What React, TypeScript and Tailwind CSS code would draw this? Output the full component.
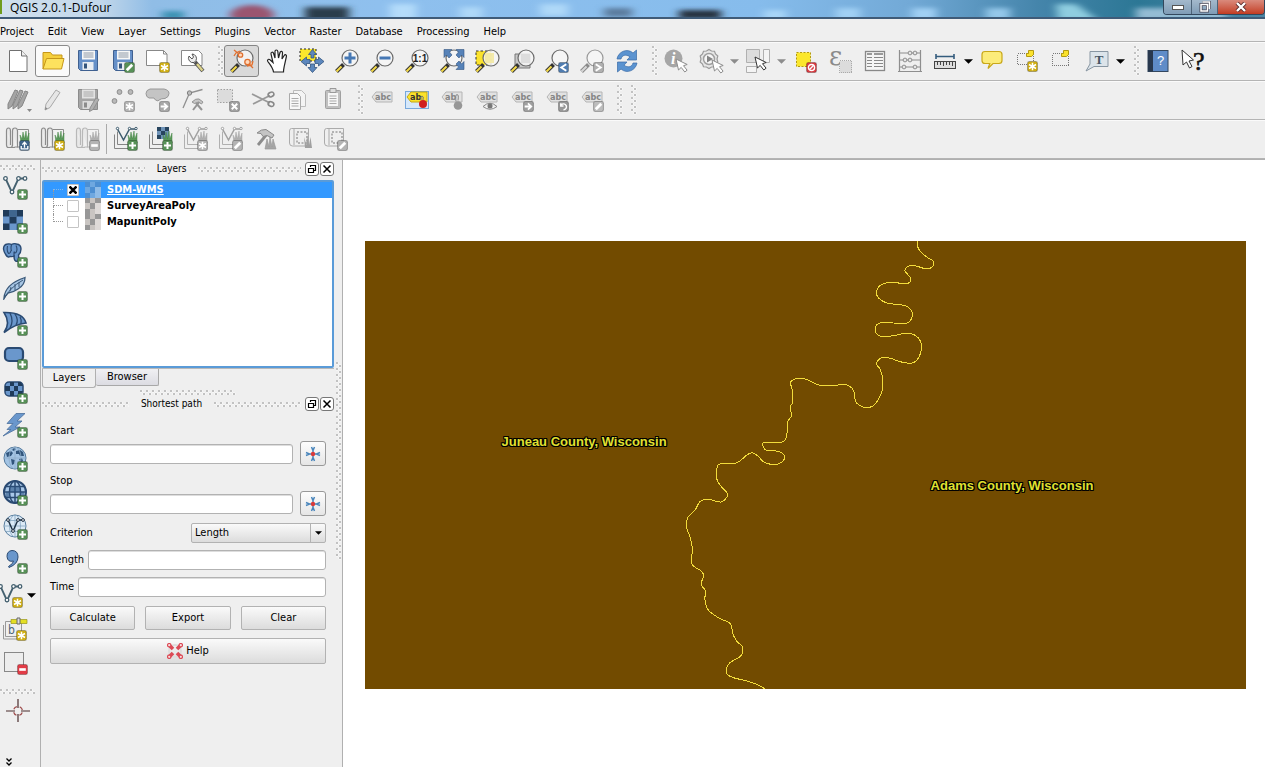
import type { ReactNode } from "react";

type IconProps = { children: ReactNode; className?: string };

function Svg({ children, className = "h-6 w-6" }: IconProps) {
  return (
    <svg viewBox="0 0 24 24" className={`${className} shrink-0 overflow-visible`} fill="none" aria-hidden="true">
      {children}
    </svg>
  );
}

/* ---------- badges and shared shapes ---------- */

type BadgeKind = "plus" | "star" | "pen" | "minus" | "x" | "arrow" | "up" | "left" | "right" | "rotate" | "no";

function Badge({ kind, fill, x = 13, y = 13 }: { kind: BadgeKind; fill: string; x?: number; y?: number }) {
  return (
    <g transform={`translate(${x} ${y}) scale(1.1)`}>
      <rect x="0.5" y="0.5" width="9" height="9" rx="1.5" fill={fill} stroke="#000" strokeOpacity="0.25" />
      <g stroke="#fff" strokeWidth="1.8">
        {kind === "plus" && <path d="M5 1.8v6.4M1.8 5h6.4" />}
        {kind === "minus" && <path d="M2 5h6" strokeWidth="2.4" />}
        {kind === "star" && <path d="M5 1.5v7M1.8 3.2l6.4 3.6M8.2 3.2L1.8 6.8" strokeWidth="1.4" />}
        {kind === "pen" && <path d="M2.5 7.5l5-5" strokeWidth="2.6" />}
        {kind === "x" && <path d="M2.5 2.5l5 5M7.5 2.5l-5 5" />}
        {kind === "arrow" && <path d="M1.5 5h5M4.5 2.2L7.5 5l-3 2.8" strokeWidth="1.6" />}
        {kind === "up" && <path d="M5 7V2.5M3 4.2L5 2l2 2.2M2 5.5V8h6V5.5" strokeWidth="1.2" />}
        {kind === "left" && <path d="M7.5 2L3 5l4.5 3" />}
        {kind === "right" && <path d="M2.5 2L7 5 2.5 8" />}
        {kind === "rotate" && <path d="M3 3.5A2.7 2.7 0 1 1 5 8M2.5 2v2.5H5" strokeWidth="1.3" />}
        {kind === "no" && (
          <>
            <circle cx="5" cy="5" r="2.8" strokeWidth="1.3" />
            <path d="M3 7l4-4" strokeWidth="1.3" />
          </>
        )}
      </g>
    </g>
  );
}

const GREEN = "#579157";
const GOLD = "#cfae12";
const GRAY = "#b4b4b4";

function Lens({ gray = false, children, cx = 15 }: { gray?: boolean; children?: ReactNode; cx?: number }) {
  return (
    <>
      <path d="M1.5 22.5l7-7" stroke={gray ? "#8a8a8a" : "#333"} strokeWidth="4" />
      <path d="M1.5 22.5l5-5" stroke={gray ? "#d6d6d6" : "#f3d94a"} strokeWidth="2.2" />
      <circle cx={cx} cy="9" r="8" fill="#f6f6f6" fillOpacity="0.85" stroke={gray ? "#999" : "#6b6b6b"} strokeWidth="1.2" />
      {children}
    </>
  );
}

function VectorV({ c = "#44606f", fill = "#fff" }: { c?: string; fill?: string }) {
  return (
    <g stroke={c} strokeWidth="1.3" fill={fill}>
      <path d="M2.5 3.5L9 17.5 15.5 3.5H22" fill="none" strokeWidth="1.8" />
      <circle cx="2.5" cy="3.5" r="1.8" />
      <circle cx="9" cy="17" r="1.8" />
      <circle cx="15.5" cy="3.5" r="1.8" />
      <circle cx="22" cy="3.5" r="1.8" />
    </g>
  );
}

function Floppy({ gray = false }: { gray?: boolean }) {
  return (
    <>
      <path d="M2.5 1.5h19v20H4.5l-2-2z" fill={gray ? "#a5a5a5" : "#6690c8"} stroke={gray ? "#8c8c8c" : "#3f6090"} />
      <rect x="6" y="1.5" width="13" height="9" fill={gray ? "#e2e2e2" : "#f7f7f7"} />
      <path d="M7.5 4h10M7.5 6h10M7.5 8h10" stroke={gray ? "#aaa" : "#8f9aa8"} />
      <rect x="6.5" y="13" width="11" height="8" fill={gray ? "#dcdcdc" : "#e9edf2"} />
      <rect x="8" y="14.5" width="3" height="5" fill={gray ? "#8c8c8c" : "#34557c"} />
    </>
  );
}

function Cursor({ x = 12, y = 10, gray = true }: { x?: number; y?: number; gray?: boolean }) {
  return (
    <path
      transform={`translate(${x} ${y})`}
      d="M0 0l2.5 11 2.7-2.6 3.6 4.6 2.3-1.8-3.6-4.5 3.7-1.2z"
      fill="#fff"
      stroke={gray ? "#8c8c8c" : "#333"}
    />
  );
}

function Grass({ gray = false }: { gray?: boolean }) {
  return (
    <path
      d="M14 16l-1-8 2 4 1-7 1.5 7 1.500-8 .8 8 2.200-6v10z"
      transform="translate(1 0)"
      fill={gray ? "#b0b0b0" : "#5a9a5a"}
      stroke={gray ? "#a5a5a5" : "#468446"}
      strokeWidth="0.5"
    />
  );
}

function GrassRolls({ gray = false, badge }: { gray?: boolean; badge: ReactNode }) {
  const s = gray ? "#b8b8b8" : "#8c8c8c";
  return (
    <Svg>
      <path d="M12 2.500h10.500V20H8" stroke={s} fill="#f2f2f2" />
      <path d="M0.500 4q0-3 2-3t2 3v14M0.500 4v14q0 2.500 2 2.500H9M6.500 4q0-3 2.500-3t2.500 3v16.500M6.500 4v13.500q0 3-2 3" stroke={s} fill="#e8e8e8" strokeWidth="1.200" />
      <Grass gray={gray} />
      {badge}
    </Svg>
  );
}

function GrassLayer({ gray = false, raster = false, badge }: { gray?: boolean; raster?: boolean; badge: ReactNode }) {
  const s = gray ? "#b0b0b0" : "#858585";
  return (
    <Svg>
      <path d="M3.500 4.500v13H21M0.500 7.500v14H15" stroke={s} />
      {raster ? (
        <>
          <rect x="8" y="0" width="12" height="12" fill="#6f93b8" />
          <path d="M8 0h4v4H8zM16 0h4v4h-4zM12 4h4v4h-4zM8 8h4v4H8z" fill="#28455f" />
        </>
      ) : (
        <g stroke={gray ? "#a0a0a0" : "#3c5a6c"}>
          <path d="M3.500 2L9.500 13 15.500 2H22" strokeWidth="1.500" />
          <circle cx="3.500" cy="1.500" r="1.200" fill="#fff" />
          <circle cx="15.500" cy="1.500" r="1.200" fill="#fff" />
          <circle cx="22" cy="1.500" r="1.200" fill="#fff" />
        </g>
      )}
      <Grass gray={gray} />
      {badge}
    </Svg>
  );
}

function Label({ children, yellow = false, short = false }: { children?: ReactNode; yellow?: boolean; short?: boolean }) {
  return (
    <Svg>
      {yellow && <rect x="0.5" y="3.500" width="23" height="17" fill="#d6e8fa" stroke="#78a8dc" />}
      <path d="M2 9l4-5h16v10H6z" fill={yellow ? "#fbe32a" : "#e2e2e2"} stroke={yellow ? "#c2a614" : "#b4b4b4"} />
      <text
        x="5"
        y="12"
        fontSize="9"
        fontWeight="700"
        fontFamily="DejaVu Sans Condensed, sans-serif"
        fill={yellow ? "#333" : "#858585"}
      >
        {yellow || short ? "ab" : "abc"}
      </text>
      {children}
    </Svg>
  );
}

function Hammer() {
  return (
    <g stroke="#949494" fill="#c6c6c6">
      <path d="M12 22L19 13M21 22l-6-7" strokeWidth="2" />
      <path d="M11 14q4-4 7-3l4 3-1.500 2-3-2-4 1.500z" />
    </g>
  );
}

/* ---------- main toolbar icons ---------- */

const NewIcon = () => (
  <Svg>
    <path d="M3.500 1.500h12l5.500 5.500v15.500H3.500z" fill="#fff" stroke="#707070" />
    <path d="M15.500 1.500V7H21" fill="#eee" stroke="#707070" />
  </Svg>
);
const OpenIcon = () => (
  <Svg>
    <path d="M2 20V3.500h7.500l2 2.500H21v4" fill="#f5cf3c" stroke="#c5961a" />
    <path d="M2 20L5.500 9.500H23L20.500 20z" fill="#fde25e" stroke="#c5961a" />
  </Svg>
);
const SaveIcon = () => <Svg><Floppy /></Svg>;
const SaveAsIcon = () => <Svg><Floppy /><Badge kind="pen" fill={GREEN} /></Svg>;
const ComposerIcon = () => (
  <Svg>
    <path d="M0.500 1.500h17l3.500 3.500v11.500H0.500z" fill="#fff" stroke="#888" />
    <path d="M17.500 1.500V5H21" stroke="#888" />
    <Badge kind="star" fill={GOLD} />
  </Svg>
);
const ManagerIcon = () => (
  <Svg>
    <path d="M0.500 1.500h17l3.500 3.500v11.500H0.500z" fill="#fff" stroke="#888" />
    <path d="M14 13l8 9" stroke="#555" strokeWidth="4" />
    <path d="M16 15l5.500 6.500" stroke="#ded48a" strokeWidth="2.400" />
    <path d="M8 7a4.500 4.500 0 0 0 5 6.500l2-2a4.500 4.500 0 0 0-4-6.500l1.500 3-1.500 2z" fill="#eee" stroke="#555" />
  </Svg>
);
const TouchIcon = () => (
  <Svg>
    <Lens />
    <g stroke="#e07030" fill="#ffd9bd" strokeWidth="1.300">
      <path d="M4 1l5 4M4 7l2-3 4-2M23 19l-4-4M23 12l-1 4-5 1" />
      <circle cx="10.500" cy="6" r="2.200" />
      <circle cx="17.500" cy="13" r="2.700" />
    </g>
  </Svg>
);
const PanIcon = () => (
  <Svg>
    <path
      d="M8.500 23C8 19 5.500 16 2.800 12.500c-1-2 1-3 2.500-1.500L8 13.500 6 5c-.3-2 2-2.500 2.600-.500L10 9V2.500c0-2 2.600-2 2.800 0L13.500 9 15 3.500c.5-1.800 2.700-1.300 2.500.500L17 10l2.200-3.500c1-1.500 2.600-.500 2.200 1L19.500 16c-.5 3-1 4-1 7z"
      fill="#fff"
      stroke="#222"
      strokeWidth="1.200"
    />
  </Svg>
);
const PanSelectionIcon = () => (
  <Svg>
    <rect x="0" y="0" width="16" height="12" fill="#fbe72c" stroke="#222" strokeDasharray="2 2" />
    <path
      d="M12.500 0.500l4 5H14v3.500h-3V5.500H8.500zM12.500 23.500l4.500-5h-2.500V15h-4v3.500H8zM1 12.500l5.500-4.500v2.500H10v4H6.500V17zM24 12.500L18.500 8v2.500H15v4h3.500V17z"
      fill="#5c87bd"
      stroke="#34567f"
      strokeWidth="0.800"
    />
  </Svg>
);
const ZoomInIcon = () => <Svg><Lens><path d="M15 3.500v11M9.500 9h11" stroke="#4678b4" strokeWidth="3" /></Lens></Svg>;
const ZoomOutIcon = () => <Svg><Lens><path d="M9.500 9h11" stroke="#4678b4" strokeWidth="3" /></Lens></Svg>;
const ZoomNativeIcon = () => (
  <Svg>
    <Lens>
      <text x="15" y="13" textAnchor="middle" fontSize="10" fontWeight="700" fontFamily="Liberation Sans, sans-serif" fill="#222">1:1</text>
    </Lens>
  </Svg>
);
const ZoomFullIcon = () => (
  <Svg>
    <Lens cx={14} />
    <path
      d="M4 0.500h8L9.500 3l2.500 3L9 9 6.500 6 4 8.500zM24 0.500h-8L18.500 3 16 6l3 3 2.500-3L24 8.500zM24 20.500h-8l2.500-2.500-2.500-3 3-3 2.500 3 2.500-2.500z"
      fill="#5682b8"
      stroke="#34567f"
      strokeWidth="0.600"
    />
  </Svg>
);
const ZoomSelectionIcon = () => (
  <Svg>
    <rect x="1" y="2" width="15" height="14" fill="#fbe22c" stroke="#333" strokeDasharray="2.500 2" />
    <Lens cx={16} />
    <path d="M10 4h9v10h-9z" fill="#f3e79a" fillOpacity="0.800" />
  </Svg>
);
const ZoomLayerIcon = () => (
  <Svg>
    <path d="M5 5h15v14H5z" fill="#c9c9c9" stroke="#777" />
    <Lens cx={16} />
    <path d="M11 5h9v9h-9z" fill="#ddd" />
  </Svg>
);
const ZoomLastIcon = () => <Svg><Lens /><Badge kind="left" fill="#4f7cb0" /></Svg>;
const ZoomNextIcon = () => <Svg><Lens gray /><Badge kind="right" fill="#b0b0b0" /></Svg>;
const RefreshIcon = () => (
  <Svg>
    <path d="M2 10C3 3 12-1.500 18 4l3.500-3v10H12l3-3.200C11 5 7 6 6 10z" fill="#5b93d0" stroke="#3a6ca8" strokeWidth="0.700" />
    <path d="M22 14c-1 7-10 11.500-16 6l-3.500 3V13H12l-3 3.200c4 2.800 8 1.800 9-2.200z" fill="#5b93d0" stroke="#3a6ca8" strokeWidth="0.700" />
  </Svg>
);
const IdentifyIcon = () => (
  <Svg>
    <circle cx="9.500" cy="9.500" r="9" fill="#a6a6a6" />
    <text x="7" y="15" fontSize="16" fontWeight="700" fontStyle="italic" fontFamily="Liberation Serif, serif" fill="#fff">i</text>
    <Cursor x={12} y={10} />
  </Svg>
);
const ActionIcon = () => (
  <Svg>
    <path
      d="M10 0.500l2.500 1.500 3 .2 1 2.800 2.300 2-.8 3 .8 3-2.300 2-1 2.800-3 .2-2.500 1.500-2.500-1.500-3-.2-1-2.800-2.300-2 .8-3-.8-3 2.300-2 1-2.800 3-.2z"
      fill="#e6e6e6"
      stroke="#9a9a9a"
      strokeWidth="1.200"
    />
    <circle cx="10" cy="10" r="5.500" fill="#f6f6f6" stroke="#a0a0a0" strokeWidth="1.500" />
    <path d="M8 6.500l6 3.500-6 3.500z" fill="#858585" />
    <Cursor x={13} y={11} />
  </Svg>
);
const SelectIcon = () => (
  <Svg>
    <path d="M0.500 0.500h13v13h-13z" fill="#ddd" stroke="#b0b0b0" />
    <path d="M17.500 0.500h6v13h-6zM0.500 17.500h10v6h-10z" fill="#f4f4f4" stroke="#b0b0b0" />
    <Cursor x={9} y={8} gray={false} />
  </Svg>
);
const DeselectIcon = () => (
  <Svg>
    <rect x="3.500" y="3.500" width="14" height="14" fill="#fbe72c" stroke="#b39a12" strokeDasharray="2 1.500" />
    <Badge kind="no" fill="#d93a40" />
  </Svg>
);
const ExpressionIcon = () => (
  <Svg>
    <text x="1" y="16" fontSize="26" fontFamily="DejaVu Serif, serif" fill="#8a8a8a">ε</text>
    <rect x="11.500" y="11.500" width="12" height="12" fill="#dcdcdc" stroke="#aaa" strokeDasharray="1 1" shapeRendering="crispEdges" />
  </Svg>
);
const TableIcon = () => (
  <Svg>
    <rect x="2.500" y="2.500" width="19" height="19" fill="#f5f5f5" stroke="#888" strokeWidth="1.300" />
    <path d="M4 5h5M11 5h9" stroke="#999" strokeWidth="2" />
    <path d="M4 8.500h5M11 8.500h9M4 11.500h5M11 11.500h9M4 14.500h5M11 14.500h9M4 17.500h5M11 17.500h9" stroke="#888" />
  </Svg>
);
const AbacusIcon = () => (
  <Svg>
    <path d="M1.500 1v22M22.500 1v22M0 22.500h24M2 4h20M2 11h20M2 18h20" stroke="#8e8e8e" strokeWidth="1.200" />
    <g fill="#e6e6e6" stroke="#8e8e8e">
      <circle cx="12" cy="4" r="1.900" /><circle cx="17" cy="4" r="1.900" />
      <circle cx="7" cy="11" r="1.900" /><circle cx="12" cy="11" r="1.900" />
      <circle cx="6" cy="18" r="1.900" /><circle cx="17" cy="18" r="1.900" />
    </g>
  </Svg>
);
const MeasureIcon = () => (
  <Svg>
    <path d="M3 7.500h18M3 5v5M21 5v5" stroke="#345c7d" strokeWidth="1.600" />
    <rect x="1.500" y="12.500" width="21" height="7" fill="#ddd" stroke="#444" />
    <path d="M4.500 13v3M7.500 13v3M10.500 13v4M13.500 13v3M16.500 13v3M19.500 13v4" stroke="#444" />
  </Svg>
);
const TipsIcon = () => (
  <Svg>
    <path d="M5 2.500h14q3 0 3 3v6q0 3-3 3h-6l-5 5 1.800-5H5q-3 0-3-3v-6q0-3 3-3z" fill="#fcec7a" stroke="#c9a81a" strokeWidth="1.200" />
  </Svg>
);
const Ribbon = () => <path d="M11.500 4.500h2v-3h5v4l-2 2h-5z" fill="#fbe22c" stroke="#b39a12" />;
const NewBookmarkIcon = () => (
  <Svg>
    <rect x="2.500" y="4.500" width="16" height="11" stroke="#777" strokeDasharray="1 1" shapeRendering="crispEdges" />
    <Ribbon />
    <Badge kind="star" fill={GOLD} x={12} y={12} />
  </Svg>
);
const BookmarksIcon = () => (
  <Svg>
    <rect x="2.500" y="4.500" width="16" height="12" stroke="#777" strokeDasharray="1 1" shapeRendering="crispEdges" />
    <Ribbon />
  </Svg>
);
const AnnotationIcon = () => (
  <Svg>
    <path d="M5 2.500h18v15H9l-8 4.500 4-7z" fill="#dce4ea" stroke="#8896a2" />
    <text x="14" y="14.500" textAnchor="middle" fontSize="13" fontWeight="700" fontFamily="Liberation Serif, serif" fill="#465563">T</text>
  </Svg>
);
const HelpBookIcon = () => (
  <Svg>
    <rect x="2" y="1.500" width="20" height="21" fill="#5f8cc8" stroke="#33475f" />
    <rect x="2" y="1.500" width="5" height="21" fill="#28384e" />
    <text x="14.500" y="16" textAnchor="middle" fontSize="13" fontFamily="Liberation Sans, sans-serif" fill="#fff">?</text>
  </Svg>
);
const WhatsThisIcon = () => (
  <Svg>
    <path d="M1 1l1 15 3.500-3 3 6 2.500-1.500-3-5.500 4.500-1z" fill="#fff" stroke="#333" />
    <text x="12" y="21" fontSize="26" fontFamily="Liberation Serif, serif" fill="#111" stroke="#111" strokeWidth="0.600">?</text>
  </Svg>
);

/* ---------- editing toolbar icons ---------- */

const PencilsIcon = () => (
  <Svg>
    <path d="M2 16L9 2l3 1L6 18l-4 3zM7 17l7-15 3 1-6 15-4 3zM12 17l7-14 3 1-6 14-4 3z" fill="#a5a5a5" stroke="#868686" />
    <path d="M21 21h5l-2.500 3z" fill="#888" />
  </Svg>
);
const PencilIcon = () => (
  <Svg>
    <path d="M5 16L15 2l4 2.500-10 15L4 22z" fill="#e6e6e6" stroke="#a8a8a8" />
    <path d="M4 22l.5-3 2 1.500z" fill="#888" />
  </Svg>
);
const SaveEditsIcon = () => (
  <Svg>
    <Floppy gray />
    <path d="M14 20l6-10 3 1.500-6 10-3.500 2z" fill="#b0b0b0" stroke="#909090" />
  </Svg>
);
const AddFeatureIcon = () => (
  <Svg>
    <g fill="#b9b9b9" stroke="#8d8d8d">
      <circle cx="8.500" cy="4" r="2.400" /><circle cx="19.500" cy="4" r="2.400" /><circle cx="3.500" cy="13" r="2.400" />
    </g>
    <Badge kind="star" fill={GRAY} />
  </Svg>
);
const MoveFeatureIcon = () => (
  <Svg>
    <path d="M4 1h14q5 1 5 4.500t-4 5q-4 0-5 1-2 2.500-4.500.5L8 10H3Q0 9 0 5.500T4 1z" fill="#c4c4c4" stroke="#989898" />
    <Badge kind="arrow" fill="#a8a8a8" />
  </Svg>
);
const NodeIcon = () => (
  <Svg>
    <path d="M2 20L8.500 5l13-3.500" stroke="#909090" strokeWidth="1.300" />
    <circle cx="8.500" cy="5" r="2.200" fill="#bbb" stroke="#808080" />
    <Hammer />
  </Svg>
);
const DeleteIcon = () => (
  <Svg>
    <rect x="1.500" y="1.500" width="15" height="13" fill="#dcdcdc" stroke="#a0a0a0" strokeDasharray="1.500 1.500" />
    <Badge kind="x" fill="#a2a2a2" />
  </Svg>
);
const CutIcon = () => (
  <Svg>
    <path d="M1 6l18 9M2 16L19 7.500" stroke="#999" strokeWidth="1.800" />
    <ellipse cx="20" cy="6.500" rx="3" ry="2.200" stroke="#888" strokeWidth="1.500" transform="rotate(-25 20 6.500)" />
    <ellipse cx="20" cy="16" rx="3" ry="2.200" stroke="#888" strokeWidth="1.500" transform="rotate(25 20 16)" />
  </Svg>
);
const CopyIcon = () => (
  <Svg>
    <path d="M7.500 2.500h8l4 4v12h-12z" fill="#f4f4f4" stroke="#bcbcbc" />
    <path d="M3.500 5.500h8l3 3v13h-11z" fill="#f8f8f8" stroke="#aaa" />
    <path d="M5.500 10.500h7M5.500 13h7M5.500 15.500h7M5.500 18h7" stroke="#aaa" />
  </Svg>
);
const PasteIcon = () => (
  <Svg>
    <rect x="4.500" y="2.500" width="15" height="18" rx="1" fill="#c0c0c0" stroke="#a0a0a0" />
    <path d="M7 5h10v13H7z" fill="#f6f6f6" />
    <path d="M9 0.500h6v4H9z" fill="#ddd" stroke="#999" />
    <path d="M8.500 8h7M8.500 10.500h7M8.500 13h7M8.500 15.500h7" stroke="#aaa" />
  </Svg>
);
const PinOn = () => <Label yellow><circle cx="18" cy="16" r="4" fill="#d02020" /><path d="M16 12q-1-4 1-4t1 4" stroke="#777" /></Label>;
const PinOff = () => <Label short><circle cx="18" cy="17.500" r="4.300" fill="#979797" /><path d="M16 13.500q-1-7 1-7t1 6" stroke="#888" /></Label>;
const EyeLabel = () => (
  <Label>
    <path d="M8 18.500q7-6.500 14 0-7 5.500-14 0z" fill="#eee" stroke="#888" />
    <circle cx="15" cy="18" r="2.500" fill="#777" />
  </Label>
);

/* ---------- layer (side) toolbar icons ---------- */

const Plus = () => <Badge kind="plus" fill={GREEN} x={14} y={14} />;
const DARK = "#2a4a72";
const MID = "#6a97cc";

function Elephant() {
  return (
    <>
      <path
        d="M0.500 6Q0.500 1.500 4.500 1q2.500-.500 4 .5 2.500-1.500 5-.5 4.500.500 4.500 5 0 3.500-2.500 6l.5 5q-1 2-3.500 1-1.500-1-1.500-5-1.500 1-4 .5Q5 15 3 12 .8 9 .5 6z"
        fill={MID}
        stroke={DARK}
        strokeWidth="1.400"
      />
      <path d="M4.500 3q-1 5 1 7.500 2 0 2.500-3M8.500 2q-1 3 0 6M13 2.500q2 4 0 7-1.500 1-2-1M11 9v5" stroke={DARK} strokeWidth="1.100" />
    </>
  );
}

function GlobeLines({ thick = false }: { thick?: boolean }) {
  return (
    <>
      <circle cx="12" cy="11" r="11" fill={thick ? "#a9c8e8" : "#dceaf6"} stroke={thick ? DARK : "#5b7f9f"} strokeWidth={thick ? 2 : 1} />
      <path d="M1 11h22M3 5.500h18M3 16.500h18M12 0v22" stroke={thick ? DARK : "#87a7c2"} strokeWidth={thick ? 1.500 : 0.800} />
      <ellipse cx="12" cy="11" rx="5.500" ry="11" stroke={thick ? DARK : "#87a7c2"} strokeWidth={thick ? 1.500 : 0.800} />
    </>
  );
}

const sideIcons: { name: string; art: ReactNode }[] = [
  { name: "Add vector layer", art: <><VectorV /><Plus /></> },
  {
    name: "Add raster layer",
    art: (
      <>
        <rect x="0" y="1" width="20" height="20" fill={MID} />
        <path d="M0 1h6.500v6.500H0zM13.500 1H20v6.500h-6.500zM6.500 7.500h7v7h-7zM0 14.500h6.500V21H0z" fill="#1f3b5a" />
        <path d="M6.500 1h7v6.500h-7zM13.500 14.500H20V21h-6.500z" fill="#3f668f" />
        <Plus />
      </>
    ),
  },
  { name: "Add PostGIS layer", art: <><Elephant /><Plus /></> },
  {
    name: "Add SpatiaLite layer",
    art: (
      <>
        <path d="M1 21Q2 7 22 0.500 22 8 15 12q-4 3-10 4z" fill="#a8c6e4" stroke="#3a5878" strokeWidth="1.300" />
        <path d="M0.500 23Q6 11 20 3M8 10l-1 4M12 7l0 6M16 5v5" stroke="#3a5878" />
        <Plus />
      </>
    ),
  },
  {
    name: "Add MSSQL layer",
    art: (
      <>
        <path d="M1 1.500Q20 1 23 12 12 13 1 21.500 8 12 1 1.500z" fill={MID} stroke={DARK} strokeWidth="1.600" />
        <path d="M7 2q4 8 0 15M12 3q4 6 1 11M17 6q2 3 1 7" stroke={DARK} strokeWidth="1.300" />
        <Plus />
      </>
    ),
  },
  { name: "Add Oracle layer", art: <><rect x="2" y="3" width="18" height="13" rx="4" fill={MID} stroke={DARK} strokeWidth="2.200" /><Plus /></> },
  {
    name: "Add Oracle raster",
    art: (
      <>
        <rect x="2" y="3" width="18" height="14" rx="4" fill={MID} stroke={DARK} strokeWidth="1.500" />
        <path d="M7 3h4v4H7zM15 3h3l2 4h-5zM2 7h5v5H2zM11 7h4v5h-4zM7 12h4v5H7zM15 12h5l-2 5h-3z" fill="#1f3b5a" />
        <Plus />
      </>
    ),
  },
  {
    name: "Add SQL Anywhere layer",
    art: <><path d="M22 0.500H13L4 10.500h6l-6 6h4L0 23 17 14h-5l7-6h-5z" fill={MID} stroke="#4a6f9c" strokeWidth="0.800" /><Plus /></>,
  },
  {
    name: "Add WMS layer",
    art: (
      <>
        <circle cx="12" cy="11" r="11" fill="#a3c4e4" stroke="#557a9c" />
        <path d="M3 6l5-2 2 2-2 3-4 1zM13 4l4-1 3 2 1 4-4 0-1-2-3 0zM8 12l4 1-1 4-2 1zM16 12l3-1 1 3-2 2zM9 3l2-2 2 1-2 2z" fill="#31557c" />
        <path d="M1 11h22M12 0v22" stroke="#8fadc9" strokeWidth="0.800" />
        <ellipse cx="12" cy="11" rx="6" ry="11" stroke="#8fadc9" strokeWidth="0.800" />
        <Plus />
      </>
    ),
  },
  {
    name: "Add WCS layer",
    art: <><GlobeLines thick /><path d="M7 5.500h10v5.500H7zM3 11h4v5.500H3zM17 11h4v5.500h-4z" fill="#2d5584" fillOpacity="0.600" /><Plus /></>,
  },
  {
    name: "Add WFS layer",
    art: (
      <>
        <GlobeLines />
        <path d="M5 5l5 11 5-11h5" stroke="#1d2f42" strokeWidth="1.400" />
        <g fill="#fff" stroke="#1d2f42">
          <circle cx="5" cy="5" r="1.400" /><circle cx="10" cy="16" r="1.400" /><circle cx="15" cy="5" r="1.400" /><circle cx="20" cy="5" r="1.400" />
        </g>
        <Plus />
      </>
    ),
  },
  {
    name: "Add delimited text layer",
    art: <><path d="M9 1.500q6 0 6 6.500 0 7-9 10.500l-.5-1q5-3 5-5.500-6 1.500-6.500-4.500Q4 2 9 1.500z" fill={MID} stroke={DARK} /><Plus /></>,
  },
  { name: "New shapefile layer", art: <g transform="translate(-5 0)"><VectorV /><Badge kind="star" fill={GOLD} x={14} y={14} /></g> },
  {
    name: "New GPX layer",
    art: (
      <>
        <path d="M2.500 4.500h16v15h-16zM0.500 8v14h14" stroke="#999" fill="#eee" />
        <text x="5" y="17" fontSize="12" fontFamily="DejaVu Sans Condensed, sans-serif" fill="#4a6478">b</text>
        <path d="M8 2.500h16v4H8z" fill="#e3df24" stroke="#99951c" strokeWidth="0.700" />
        <path d="M14 1h3v6h-3z" fill="#ddd" stroke="#666" />
        <Badge kind="star" fill={GOLD} x={13} y={13} />
      </>
    ),
  },
  { name: "Remove layer", art: <><rect x="1.500" y="1.500" width="19" height="19" fill="#ededed" stroke="#888" /><Badge kind="minus" fill="#e23b46" x={14} y={13} /></> },
];

/* ---------- toolbar pieces ---------- */

type Tool = { name: string; art?: ReactNode; kind?: "handle" | "menu" | "menuOff" | "sep"; look?: "hover" | "pressed" };

const mainTools: Tool[] = [
  { name: "New project", art: <NewIcon /> },
  { name: "Open project", art: <OpenIcon />, look: "hover" },
  { name: "Save project", art: <SaveIcon /> },
  { name: "Save project as", art: <SaveAsIcon /> },
  { name: "New print composer", art: <ComposerIcon /> },
  { name: "Composer manager", art: <ManagerIcon /> },
  { name: "h1", kind: "handle" },
  { name: "Touch zoom and pan", art: <TouchIcon />, look: "pressed" },
  { name: "Pan map", art: <PanIcon /> },
  { name: "Pan map to selection", art: <PanSelectionIcon /> },
  { name: "Zoom in", art: <ZoomInIcon /> },
  { name: "Zoom out", art: <ZoomOutIcon /> },
  { name: "Zoom to native resolution", art: <ZoomNativeIcon /> },
  { name: "Zoom full", art: <ZoomFullIcon /> },
  { name: "Zoom to selection", art: <ZoomSelectionIcon /> },
  { name: "Zoom to layer", art: <ZoomLayerIcon /> },
  { name: "Zoom last", art: <ZoomLastIcon /> },
  { name: "Zoom next", art: <ZoomNextIcon /> },
  { name: "Refresh", art: <RefreshIcon /> },
  { name: "h2", kind: "handle" },
  { name: "Identify features", art: <IdentifyIcon /> },
  { name: "Run feature action", art: <ActionIcon /> },
  { name: "Action options", kind: "menuOff" },
  { name: "Select features", art: <SelectIcon /> },
  { name: "Selection options", kind: "menuOff" },
  { name: "Deselect all", art: <DeselectIcon /> },
  { name: "Select by expression", art: <ExpressionIcon /> },
  { name: "Open attribute table", art: <TableIcon /> },
  { name: "Field calculator", art: <AbacusIcon /> },
  { name: "Measure", art: <MeasureIcon /> },
  { name: "Measure options", kind: "menu" },
  { name: "Map tips", art: <TipsIcon /> },
  { name: "New bookmark", art: <NewBookmarkIcon /> },
  { name: "Show bookmarks", art: <BookmarksIcon /> },
  { name: "Text annotation", art: <AnnotationIcon /> },
  { name: "Annotation options", kind: "menu" },
  { name: "h3", kind: "handle" },
  { name: "Help contents", art: <HelpBookIcon /> },
  { name: "What's this", art: <WhatsThisIcon /> },
];

const editTools: Tool[] = [
  { name: "Current edits", art: <PencilsIcon /> },
  { name: "Toggle editing", art: <PencilIcon /> },
  { name: "Save edits", art: <SaveEditsIcon /> },
  { name: "Add feature", art: <AddFeatureIcon /> },
  { name: "Move feature", art: <MoveFeatureIcon /> },
  { name: "Node tool", art: <NodeIcon /> },
  { name: "Delete selected", art: <DeleteIcon /> },
  { name: "Cut features", art: <CutIcon /> },
  { name: "Copy features", art: <CopyIcon /> },
  { name: "Paste features", art: <PasteIcon /> },
  { name: "h4", kind: "handle" },
  { name: "Labeling", art: <Label /> },
  { name: "Highlight pinned labels", art: <PinOn /> },
  { name: "Pin labels", art: <PinOff /> },
  { name: "Show or hide labels", art: <EyeLabel /> },
  { name: "Move label", art: <Label><Badge kind="arrow" fill="#a0a0a0" /></Label> },
  { name: "Rotate label", art: <Label><Badge kind="rotate" fill="#989898" /></Label> },
  { name: "Change label", art: <Label><Badge kind="pen" fill="#bdbdbd" /></Label> },
  { name: "h5", kind: "handle" },
  { name: "h6", kind: "handle" },
];

const RegionSheet = () => (
  <>
    <path d="M0.500 4q0-2.500 2-2.500h17v17.500h-16q-3 0-3-3zM5 2v16" stroke="#ababab" fill="#efefef" />
    <rect x="8" y="5" width="10" height="11" stroke="#777" strokeDasharray="2 1.500" />
  </>
);

const grassTools: Tool[] = [
  { name: "Open mapset", art: <GrassRolls badge={<Badge kind="up" fill="#3f6488" />} /> },
  { name: "New mapset", art: <GrassRolls badge={<Badge kind="star" fill={GOLD} />} /> },
  { name: "Close mapset", art: <GrassRolls gray badge={<Badge kind="minus" fill={GRAY} />} /> },
  { name: "s1", kind: "sep" },
  { name: "Add GRASS vector layer", art: <GrassLayer badge={<Badge kind="plus" fill={GREEN} />} /> },
  { name: "Add GRASS raster layer", art: <GrassLayer raster badge={<Badge kind="plus" fill={GREEN} />} /> },
  { name: "Create GRASS vector", art: <GrassLayer gray badge={<Badge kind="star" fill={GRAY} />} /> },
  { name: "Edit GRASS vector", art: <GrassLayer gray badge={<Badge kind="pen" fill={GRAY} />} /> },
  {
    name: "Open GRASS tools",
    art: (
      <Svg>
        <path d="M11 22l2-10 2 8 1-10 2 10 1-8 3 10z" fill="#a5a5a5" stroke="#999" strokeWidth="0.700" />
        <path d="M4 18L13 7" stroke="#8c8c8c" strokeWidth="2.800" />
        <path d="M3 6q4-4 9-3.500l8 5.500-2 3-5-2.500-4 1-2-3z" fill="#c4c4c4" stroke="#8a8a8a" />
      </Svg>
    ),
  },
  {
    name: "Display region",
    art: (
      <Svg>
        <RegionSheet />
        <path d="M16 21l-1-11 2.500 8 .5-10 2 10 1.500-8 1.500 11z" fill="#a0a0a0" />
      </Svg>
    ),
  },
  {
    name: "Edit region",
    art: (
      <Svg>
        <RegionSheet />
        <Badge kind="pen" fill={GRAY} />
      </Svg>
    ),
  },
];

const DOTS_V =
  "bg-[radial-gradient(circle_at_1px_1px,#c2c2c2_1px,#fff_1px,transparent_2px),radial-gradient(circle_at_4px_4px,#c2c2c2_1px,#fff_1px,transparent_2px)] bg-[length:6px_6px]";

function Tools({ items }: { items: Tool[] }) {
  return (
    <div role="toolbar" className="flex h-[39px] items-center border-b border-[#b4b4b4] bg-[#efefef] shadow-[inset_0_1px_0_#fafafa]">
      {items.map((t) => {
        if (t.kind === "handle")
          return (
            <span key={t.name} className="flex h-[30px] w-[14px] shrink-0 justify-end">
              <span className={`w-[6px] ${DOTS_V}`} />
            </span>
          );
        if (t.kind === "sep") return <span key={t.name} className="mr-px h-[30px] w-[2px] shrink-0 border-r border-[#aaa]" />;
        if (t.kind)
          return (
            <button key={t.name} aria-label={t.name} className="flex h-8 w-3 shrink-0 items-center justify-center">
              <svg viewBox="0 0 10 5" className={t.kind === "menu" ? "h-[5px] w-[9px] shrink-0 fill-black" : "h-[5px] w-[9px] shrink-0 fill-[#8c8c8c]"} aria-hidden="true">
                <path d="M0 0h10L5 5z" />
              </svg>
            </button>
          );
        const look =
          t.look === "hover"
            ? "border-[#8a8a8a] bg-[#fafafa]"
            : t.look === "pressed"
              ? "border-[#858585] bg-[#d9d9d9]"
              : "border-transparent";
        return (
          <button key={t.name} aria-label={t.name} className={`flex h-8 w-[35px] shrink-0 items-center justify-center rounded-[3px] border ${look}`}>
            {t.art}
          </button>
        );
      })}
    </div>
  );
}

function DotsRow({ className = "flex-1" }: { className?: string }) {
  return <span className={`h-[5px] ${DOTS_V} ${className}`} />;
}

function PanelHeader({ title }: { title: string }) {
  return (
    <div className="flex h-[14px] items-center">
      <DotsRow />
      <h2 className="px-3 text-[10px] leading-[14px]">{title}</h2>
      <DotsRow />
      <button aria-label={`Float ${title}`} className="ml-1 flex h-[14px] w-[14px] items-center justify-center rounded-[3px] border border-[#777] bg-white">
        <svg viewBox="0 0 10 10" className="h-[10px] w-[10px] shrink-0" fill="none" stroke="#000" aria-hidden="true">
          <path d="M3.500 3V1.500h5v5H7M3 1.500h6M1.500 4.500h5v4h-5zM1 4.500h6" strokeWidth="1.200" />
        </svg>
      </button>
      <button aria-label={`Close ${title}`} className="ml-px flex h-[14px] w-[14px] items-center justify-center rounded-[3px] border border-[#777] bg-white">
        <svg viewBox="0 0 10 10" className="h-[10px] w-[10px] shrink-0" stroke="#000" strokeWidth="1.500" aria-hidden="true">
          <path d="M1.500 1.500l7 7M8.500 1.500l-7 7" />
        </svg>
      </button>
    </div>
  );
}

/* ---------- title bar ---------- */

function TitleBar() {
  return (
    <header className="relative flex h-[19px] items-start overflow-hidden border-b-2 border-[#3f5b78] bg-[linear-gradient(90deg,#cfdfed_0%,#c2d7ea_8%,#90bde6_12%,#8fc0ee_30%,#86bcec_60%,#72a9d6_72%,#4585ab_82%,#2c7795_90%,#4c86a4_100%)]">
      <svg viewBox="0 0 1265 17" preserveAspectRatio="none" className="absolute inset-0 h-[17px] w-full" aria-hidden="true">
        <defs>
          <filter id="soft" x="-20%" y="-80%" width="140%" height="260%">
            <feGaussianBlur stdDeviation="5 2" />
          </filter>
        </defs>
        <g filter="url(#soft)">
          <rect x="162" y="11" width="22" height="9" fill="#3c93b4" />
          <ellipse cx="252" cy="15" rx="22" ry="10" fill="#9a5570" />
          <rect x="305" y="7" width="44" height="14" fill="#2c3c4c" />
          <rect x="390" y="4" width="26" height="16" fill="#b4dcfa" />
          <rect x="460" y="7" width="22" height="12" fill="#aed8f8" />
          <rect x="540" y="4" width="28" height="12" fill="#aed8f8" />
          <rect x="604" y="8" width="28" height="9" fill="#5b7d9f" />
          <rect x="679" y="10" width="42" height="9" fill="#26333f" />
          <rect x="764" y="10" width="22" height="10" fill="#a8d6f8" />
          <rect x="836" y="8" width="24" height="12" fill="#a0d0f4" />
          <rect x="912" y="8" width="24" height="12" fill="#a0d0f4" />
          <rect x="986" y="8" width="24" height="12" fill="#94c8ea" />
          <path d="M1056 4h20l22 16h-40z" fill="#8fcde0" />
          <rect x="1136" y="8" width="90" height="12" fill="#94bcd4" />
        </g>
      </svg>
      <span className="relative h-[14px] w-[2px] bg-[#6f9c1e]" />
      <h1 className="relative ml-2 font-['Open_Sans',sans-serif] text-[12px] leading-[16px] font-normal text-black">QGIS 2.0.1-Dufour</h1>
      <div className="relative ml-auto flex h-[15px] overflow-hidden rounded-b-[4px] border border-t-0 border-[#33475c]">
        <button aria-label="Minimize" className="flex w-7 items-center justify-center border-r border-[#4d6378] bg-gradient-to-b from-[#a4b9cc] to-[#7f9cb6]">
          <span className="h-[5px] w-3 border border-[#555] bg-white" />
        </button>
        <button aria-label="Restore" className="flex w-[26px] items-center justify-center border-r border-[#4d6378] bg-gradient-to-b from-[#a4b9cc] to-[#7f9cb6]">
          <svg viewBox="0 0 12 12" className="h-3 w-3 shrink-0" fill="none" aria-hidden="true">
            <path d="M3.500 1h7v7M2 3.500h6.500V10H2z" stroke="#445" strokeWidth="3" />
            <path d="M3.500 1h7v7M2 3.500h6.500V10H2z" stroke="#fff" strokeWidth="1.500" />
          </svg>
        </button>
        <button aria-label="Close" className="flex w-[46px] items-center justify-center bg-gradient-to-b from-[#d98a7c] to-[#c23a20]">
          <svg viewBox="0 0 12 10" className="h-[10px] w-3 shrink-0" fill="none" aria-hidden="true">
            <path d="M2 1l8 8M10 1L2 9" stroke="#5a2a2a" strokeWidth="4" />
            <path d="M2 1l8 8M10 1L2 9" stroke="#fff" strokeWidth="2.400" />
          </svg>
        </button>
      </div>
    </header>
  );
}

const menus = ["Project", "Edit", "View", "Layer", "Settings", "Plugins", "Vector", "Raster", "Database", "Processing", "Help"];

/* ---------- panels ---------- */

function LayerSwatch({ selected }: { selected: boolean }) {
  return (
    <svg viewBox="0 0 16 16" className="ml-[6px] h-4 w-4 shrink-0" aria-hidden="true">
      <rect width="16" height="16" fill={selected ? "#6fa8e0" : "#c9c5c2"} />
      <path d="M0 0h5v5H0zM10 0h6v5h-6zM5 5h5v6H5zM0 11h5v5H0z" fill={selected ? "#4d8fd2" : "#979797"} />
      <path d="M10 11h6v5h-6zM10 5h6v6h-6z" fill={selected ? "#8fbce8" : "#dedad8"} />
    </svg>
  );
}

const layers = [
  { name: "SDM-WMS", on: true },
  { name: "SurveyAreaPoly", on: false },
  { name: "MapunitPoly", on: false },
];

function LayersPanel() {
  return (
    <section className="pt-[2px]">
      <PanelHeader title="Layers" />
      <ul className="mt-1 h-[188px] overflow-hidden rounded-[2px] border-2 border-[#5a9bd8] bg-white">
        {layers.map((l, i) => (
          <li key={l.name} className={l.on ? "flex h-4 items-center bg-[#3399ff] pl-[9px] text-white" : "flex h-4 items-center bg-white pl-[9px]"}>
            <span className="flex h-4 w-[10px] flex-col">
              <span className={i === 0 ? "h-2 w-[10px] border-b border-dotted border-[#86b8ea]" : "h-2 w-[10px] border-b border-l border-dotted border-[#999]"} />
              <span className={i === 2 ? "h-2 w-[10px]" : "h-2 w-[10px] border-l border-dotted border-[#999]"} />
            </span>
            <label className="flex h-4 items-center text-[11px] leading-4 font-bold">
              <span className="relative ml-1 flex h-3 w-3 items-center justify-center">
                <input type="checkbox" defaultChecked={l.on} className="peer h-3 w-3 appearance-none rounded-[1px] border border-[#c4c4c4] bg-white" />
                <svg viewBox="0 0 8 8" className="absolute hidden h-2 w-2 peer-checked:block" stroke="#000" strokeWidth="2.500" aria-hidden="true">
                  <path d="M0.500 0.500l7 7M7.500 0.500l-7 7" />
                </svg>
              </span>
              <LayerSwatch selected={l.on} />
              <span className={l.on ? "ml-[6px] underline" : "ml-[6px]"}>{l.name}</span>
            </label>
          </li>
        ))}
      </ul>
      <div role="tablist" className="flex h-[20px] items-start border-t border-[#b9b9b9] text-[11px]">
        <button role="tab" aria-selected="true" className="h-[19px] w-[54px] rounded-b-[3px] border border-t-0 border-[#b0b0b0] bg-[#efefef]">
          Layers
        </button>
        <button role="tab" aria-selected="false" className="h-[17px] w-[63px] rounded-b-[2px] border border-t-0 border-l-0 border-[#a8a8a8] bg-gradient-to-b from-[#f0f0f3] to-[#dcdce2]">
          Browser
        </button>
      </div>
    </section>
  );
}

const FIELD = "h-5 min-w-0 flex-1 rounded-[3px] border border-[#b2b2b2] bg-white px-1 outline-none shadow-[inset_0_1px_0_#ddd]";
const BUTTON = "rounded-[2px] border border-[#b2b2b2] bg-gradient-to-b from-[#fafafa] to-[#dcdcdc]";

function PickPoint({ label }: { label: string }) {
  return (
    <button aria-label={label} className="ml-[7px] flex h-[25px] w-[26px] shrink-0 items-center justify-center rounded-[3px] border border-[#999] bg-gradient-to-b from-[#fdfdfd] to-[#e6e6e6]">
      <svg viewBox="0 0 16 16" className="h-4 w-4 shrink-0" fill="none" stroke="#4a86bc" aria-hidden="true">
        <path d="M6.500 1L8 4.500 9.500 1M8 3v10M6.500 15L8 11.500 9.500 15M1 6.500L4.500 8 1 9.500M3 8h10M15 6.500L11.500 8 15 9.500" strokeWidth="1.500" />
        <circle cx="8" cy="8" r="2.200" fill="#d83a3a" stroke="none" />
      </svg>
    </button>
  );
}

function ShortestPathPanel() {
  return (
    <section className="flex flex-col">
      <PanelHeader title="Shortest path" />
      <form className="flex flex-col px-2 pt-[13px] text-[11px] leading-[14px]">
        <label htmlFor="start" className="self-start">Start</label>
        <div className="mt-[3px] flex items-center">
          <input id="start" type="text" className={FIELD} />
          <PickPoint label="Pick start point" />
        </div>
        <label htmlFor="stop" className="mt-2 self-start">Stop</label>
        <div className="mt-[3px] flex items-center">
          <input id="stop" type="text" className={FIELD} />
          <PickPoint label="Pick stop point" />
        </div>
        <div className="mt-[7px] flex items-center">
          <label htmlFor="criterion" className="flex-1">Criterion</label>
          <div className="relative flex w-[135px]">
            <select id="criterion" className={`h-5 w-full appearance-none pl-[3px] outline-none ${BUTTON}`}>
              <option>Length</option>
              <option>Time</option>
            </select>
            <span className="pointer-events-none absolute inset-y-0 right-0 flex w-4 items-center justify-center border-l border-[#b2b2b2]">
              <svg viewBox="0 0 8 4" className="h-1 w-[7px] fill-black" aria-hidden="true"><path d="M0 0h8L4 4z" /></svg>
            </span>
          </div>
        </div>
        <div className="mt-[7px] flex items-center gap-1">
          <label htmlFor="length">Length</label>
          <input id="length" type="text" className={FIELD} />
        </div>
        <div className="mt-[7px] flex items-center gap-1">
          <label htmlFor="time">Time</label>
          <input id="time" type="text" className={FIELD} />
        </div>
        <div className="mt-[9px] grid grid-cols-3 gap-[10px]">
          <button type="button" className={`h-6 ${BUTTON}`}>Calculate</button>
          <button type="button" className={`h-6 ${BUTTON}`}>Export</button>
          <button type="button" className={`h-6 ${BUTTON}`}>Clear</button>
        </div>
        <button type="button" className={`mt-2 flex h-[26px] items-center justify-center gap-[3px] ${BUTTON}`}>
          <svg viewBox="0 0 16 16" className="h-4 w-4 shrink-0" fill="none" stroke="#dc4a56" aria-hidden="true">
            <circle cx="8" cy="8" r="6" stroke="#ddd" strokeWidth="2" />
            <path d="M2.500 2.500L6 6M13.500 2.500L10 6M2.500 13.500L6 10M13.500 13.500L10 10" strokeWidth="3.600" />
            <g fill="#f6dede" strokeWidth="1.200">
              <circle cx="2.200" cy="2.200" r="1.700" /><circle cx="13.800" cy="2.200" r="1.700" />
              <circle cx="2.200" cy="13.800" r="1.700" /><circle cx="13.800" cy="13.800" r="1.700" />
            </g>
          </svg>
          Help
        </button>
      </form>
    </section>
  );
}

/* ---------- map ---------- */

const river: [number, number][] = [
  [712, 16], [713, 35], [722, 50], [740, 66], [757, 76], [761, 88], [752, 99], [735, 101], [715, 95], [695, 91], [680, 97], [675, 107],
  [683, 118], [692, 130], [688, 143], [672, 146], [635, 142], [605, 148], [592, 162], [590, 180], [604, 196], [628, 206], [655, 208],
  [682, 215], [695, 228], [697, 243], [688, 261], [675, 265], [640, 264], [612, 262], [592, 268], [585, 281], [592, 299], [615, 305],
  [645, 301], [680, 294], [706, 301], [722, 320], [725, 340], [716, 368], [702, 382], [688, 385], [660, 380], [635, 371], [612, 367],
  [597, 373], [590, 388], [600, 402], [607, 425], [607, 465], [597, 490], [580, 512], [558, 518], [538, 511], [526, 497], [521, 468],
  [508, 453], [488, 448], [465, 451], [420, 451], [395, 440], [372, 431], [350, 431], [335, 437], [332, 447], [338, 470], [337, 503],
  [331, 515], [334, 543], [323, 560], [321, 595], [317, 612], [303, 622], [253, 622], [250, 635], [258, 645], [295, 649], [310, 657],
  [314, 670], [303, 683], [290, 688], [272, 688], [250, 680], [235, 664], [222, 655], [212, 654], [198, 662], [182, 676], [165, 685],
  [125, 686], [112, 695], [110, 730], [120, 750], [142, 775], [140, 787], [122, 801], [85, 793], [60, 800], [45, 825], [25, 845],
  [19, 865], [20, 880], [30, 905], [37, 940], [35, 985], [50, 1000], [60, 1005], [71, 1020], [65, 1040], [66, 1053], [76, 1068],
  [75, 1095], [85, 1125], [115, 1148], [148, 1163], [155, 1175], [158, 1195], [170, 1218], [187, 1235], [188, 1250], [180, 1265],
  [150, 1283], [139, 1300], [142, 1318], [160, 1328], [200, 1338], [235, 1350], [258, 1364],
];

function smooth(points: [number, number][]) {
  let d = `M${points[0][0]} ${points[0][1]}`;
  for (let i = 0; i < points.length - 1; i++) {
    const [p0, p1, p2, p3] = [points[Math.max(i - 1, 0)], points[i], points[i + 1], points[Math.min(i + 2, points.length - 1)]];
    d += `C${p1[0] + (p2[0] - p0[0]) / 6} ${p1[1] + (p2[1] - p0[1]) / 6} ${p2[0] - (p3[0] - p1[0]) / 6} ${p2[1] - (p3[1] - p1[1]) / 6} ${p2[0]} ${p2[1]}`;
  }
  return d;
}

const PLACE =
  "absolute font-['Liberation_Sans',sans-serif] text-[13px] leading-4 font-bold whitespace-nowrap text-[#e0e030] [text-shadow:1px_0_#000,-1px_0_#000,0_1px_#000,0_-1px_#000,1px_1px_#000,-1px_-1px_#000,1px_-1px_#000,-1px_1px_#000]";

function MapCanvas() {
  return (
    <main className="min-w-0 flex-1 border-t border-l border-[#b0b0b0] bg-white pt-[81px] pr-[19px] pl-[22px]">
      <div className="relative overflow-hidden bg-[#724b00]">
        <svg viewBox="0 0 881 448" className="block w-full" fill="none" role="img" aria-label="County boundary">
          <path
            d={smooth(river)}
            transform="translate(315 -6) scale(0.333333)"
            stroke="#f2dc3c"
            strokeWidth="1"
            vectorEffect="non-scaling-stroke"
            shapeRendering="crispEdges"
          />
        </svg>
        <span className={`${PLACE} top-[43%] left-[15.500%]`}>Juneau County, Wisconsin</span>
        <span className={`${PLACE} top-[53%] left-[64.200%]`}>Adams County, Wisconsin</span>
      </div>
    </main>
  );
}

export default function App() {
  return (
    <div className="flex h-screen flex-col overflow-hidden bg-[#efefef] font-['DejaVu_Sans_Condensed','DejaVu_Sans',sans-serif] text-[11px] text-black">
      <TitleBar />
      <nav className="flex h-[23px] shrink-0 items-center gap-[14px] border-b border-[#b4b4b4] pt-1 text-[11px] leading-[14px]">
        {menus.map((m) => (
          <button key={m}>{m}</button>
        ))}
      </nav>
      <div className="shrink-0">
        <Tools items={mainTools} />
        <Tools items={editTools} />
        <Tools items={grassTools} />
      </div>
      <div className="flex min-h-0 flex-1">
        <aside className="flex w-[41px] shrink-0 flex-col overflow-hidden border-t border-r border-[#b0b0b0] pt-[5px]">
          <DotsRow className="w-[35px] shrink-0" />
          <div className="flex flex-col">
            {sideIcons.map((s) => (
              <div key={s.name} className="flex h-[34px] shrink-0 items-center">
                <button aria-label={s.name} className="flex h-[34px] w-[30px] shrink-0 items-center pl-[3px]">
                  <Svg>{s.art}</Svg>
                </button>
                {s.name === "New shapefile layer" && (
                  <button aria-label="New layer options" className="-ml-[3px] flex">
                    <svg viewBox="0 0 10 5" className="h-[5px] w-[9px] fill-black" aria-hidden="true"><path d="M0 0h10L5 5z" /></svg>
                  </button>
                )}
              </div>
            ))}
          </div>
          <DotsRow className="mt-[9px] w-[35px] shrink-0" />
          <button aria-label="Coordinate capture" className="mt-[5px] flex w-[35px] justify-center">
            <Svg>
              <path d="M12 0v9M12 15v8M0 12h9M15 12h9" stroke="#4a2c2c" strokeWidth="1.200" />
              <circle cx="12" cy="12" r="4.500" stroke="#a05050" strokeWidth="1.200" strokeDasharray="4 3" strokeDashoffset="-1.500" />
            </Svg>
          </button>
          <button aria-label="More tools" className="mt-auto mb-px ml-[6px] flex self-start">
            <svg viewBox="0 0 6 8" className="h-2 w-[6px]" fill="none" stroke="#000" strokeWidth="1.300" aria-hidden="true">
              <path d="M0.500 0.500L3 3 5.500.5M.5 4.500L3 7l2.500-2.500" />
            </svg>
          </button>
        </aside>
        <div className="flex w-[293px] shrink-0 flex-col border-t border-[#b0b0b0] pl-px">
          <LayersPanel />
          <DotsRow className="my-[2px] w-24 self-center" />
          <ShortestPathPanel />
        </div>
        <div className="flex w-[8px] shrink-0 flex-col border-t border-[#b0b0b0] pt-[202px] pl-[2px]">
          <span className={`h-[198px] w-[5px] ${DOTS_V}`} />
        </div>
        <MapCanvas />
      </div>
    </div>
  );
}
